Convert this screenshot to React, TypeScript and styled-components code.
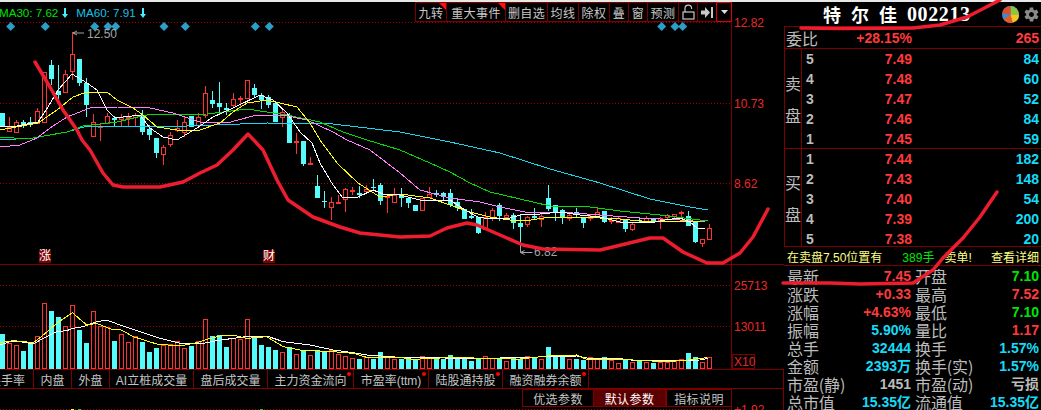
import React from "react";
import styled, { createGlobalStyle } from "styled-components";
import { IoMdSettings } from "react-icons/io";

const FONT = `"Liberation Sans", "Noto Sans CJK SC", sans-serif`;
const LINE = "#7d0000";
const RED = "#ff3232";
const CYAN = "#54fcfc";

const Global = createGlobalStyle`
  html, body { margin: 0; padding: 0; background: #000; }
  body { font-family: ${FONT}; }
`;

const Page = styled.div`
  position: relative;
  width: 1041px;
  height: 410px;
  overflow: hidden;
  background: #000;
  display: flex;
  flex-direction: column;
`;
const TopEdge = styled.div`
  height: 2px;
  flex: none;
  background: #e8e8e8;
`;
const Body = styled.div`
  flex: 1;
  display: flex;
  min-height: 0;
`;
const Main = styled.main`
  width: 784px;
  flex: none;
  display: flex;
  flex-direction: column;
`;
const PricePane = styled.section`
  position: relative;
  height: 263px;
  flex: none;
`;
const VolumePane = styled.section`
  height: 104px;
  flex: none;
`;
const Lower = styled.div`
  position: relative;
  flex: 1;
  display: flex;
  flex-direction: column;
  box-sizing: border-box;
  border-right: 1px solid ${LINE};
  overflow: hidden;
`;
const ChartSvg = styled.svg`
  display: block;
  width: 784px;
  height: 100%;
`;
const FooterSvg = styled.svg`
  display: block;
  width: 784px;
  height: 3px;
  flex: none;
`;
const AxisText = styled.text`
  font-family: ${FONT};
  font-size: 12px;
  fill: #e62a2a;
`;
const AxisTail = styled.span`
  position: absolute;
  left: 734px;
  top: 34px;
  font-size: 12px;
  line-height: 14px;
  color: #e62a2a;
`;
const PeakText = styled.text`
  font-family: ${FONT};
  font-size: 12px;
  fill: #a4a4a4;
`;
const Legend = styled.div`
  position: absolute;
  left: -1px;
  top: 4px;
  display: flex;
  gap: 8px;
  font-size: 11.6px;
  line-height: 14px;
`;
const LegendItem = styled.span<{ $color: string }>`
  color: ${(p) => p.$color};
  display: inline-flex;
  align-items: center;
  gap: 4px;
`;
const Marker = styled.span<{ $left: number }>`
  position: absolute;
  left: ${(p) => p.$left}px;
  top: 248px;
  width: 12px;
  height: 13px;
  background: #7d0000;
  color: #fff;
  font-size: 12px;
  line-height: 13px;
  text-align: center;
`;
const Toolbar = styled.div`
  position: absolute;
  left: 415px;
  top: 0;
  height: 20px;
  display: flex;
  background: #000;
`;
const ToolCell = styled.div<{ $w: number; $active?: boolean; $flag?: boolean }>`
  position: relative;
  box-sizing: border-box;
  width: ${(p) => p.$w + 1}px;
  margin-right: -1px;
  height: 20px;
  border: 1px solid ${(p) => (p.$active ? "#e00000" : LINE)};
  z-index: ${(p) => (p.$active ? 1 : 0)};
  display: flex;
  align-items: center;
  justify-content: center;
  color: #c8c8c8;
  font-size: 12px;
  letter-spacing: 0.4px;
  white-space: nowrap;
  &::after {
    content: "";
    display: ${(p) => (p.$flag ? "block" : "none")};
    position: absolute;
    top: 0;
    right: 0;
    border-top: 7px solid #ff1010;
    border-left: 7px solid transparent;
  }
`;
const TabBar = styled.nav`
  height: 20px;
  flex: none;
  box-sizing: border-box;
  display: flex;
  border-top: 1px solid ${LINE};
  border-bottom: 1px solid ${LINE};
  overflow: hidden;
`;
const Tab = styled.div<{ $w: number; $dot?: boolean; $clip?: boolean }>`
  position: relative;
  box-sizing: border-box;
  width: ${(p) => p.$w}px;
  flex: none;
  border-right: 1px solid ${LINE};
  display: flex;
  align-items: center;
  justify-content: ${(p) => (p.$clip ? "flex-end" : "center")};
  padding-right: ${(p) => (p.$clip ? 8 : 0)}px;
  color: #c4c4c4;
  font-size: 12px;
  white-space: nowrap;
  &::after {
    content: "";
    display: ${(p) => (p.$dot ? "block" : "none")};
    position: absolute;
    top: 2px;
    right: 2px;
    width: 4px;
    height: 4px;
    border-radius: 50%;
    background: #ff0000;
  }
`;
const ParamBar = styled.div`
  height: 18px;
  flex: none;
  display: flex;
  padding-left: 522px;
`;
const ParamButton = styled.div<{ $w: number; $active?: boolean }>`
  box-sizing: border-box;
  width: ${(p) => p.$w}px;
  height: 18px;
  border: 1px solid ${LINE};
  border-left-width: ${(p) => (p.$active ? 0 : 1)}px;
  background: ${(p) => (p.$active ? "#5a0000" : "transparent")};
  color: ${(p) => (p.$active ? "#fff" : "#c4c4c4")};
  font-size: 12px;
  letter-spacing: 0.4px;
  display: flex;
  align-items: center;
  justify-content: center;
`;
const Side = styled.aside`
  width: 257px;
  flex: none;
  display: flex;
  flex-direction: column;
  font-size: 14px;
`;
const SideHeader = styled.header`
  position: relative;
  height: 24px;
  flex: none;
  box-sizing: border-box;
  display: flex;
  align-items: center;
  padding-left: 39px;
`;
const StockName = styled.span`
  color: #fff;
  font-family: "Noto Sans CJK SC", sans-serif;
  font-weight: 700;
  font-size: 18px;
  letter-spacing: 10px;
  white-space: nowrap;
`;
const StockCode = styled.span`
  color: #fff;
  font-family: "Liberation Serif", serif;
  font-weight: 700;
  font-size: 20px;
  letter-spacing: 0.6px;
`;
const HeaderIcons = styled.div`
  margin-left: auto;
  display: flex;
  align-items: center;
  gap: 4px;
  padding-right: 1px;
`;
const RatioRow = styled.div`
  height: 23px;
  flex: none;
  box-sizing: border-box;
  border-top: 1px solid ${LINE};
  border-left: 1px solid ${LINE};
  border-bottom: 1px solid ${LINE};
  display: grid;
  grid-template-columns: 126px 1fr;
  padding: 0 2px 0 1px;
  align-items: center;
`;
const SplitCell = styled.div`
  display: flex;
  justify-content: space-between;
  align-items: center;
`;
const Label = styled.span`
  color: #bcbcbc;
  font-family: "Noto Sans CJK SC", sans-serif;
  font-size: 16px;
  line-height: 18px;
  white-space: nowrap;
  letter-spacing: -0.1px;
`;
const Num = styled.span<{ $color: string; $left?: boolean }>`
  color: ${(p) => p.$color};
  font-family: ${FONT};
  font-weight: 700;
  font-size: 14px;
  line-height: 18px;
  white-space: nowrap;
  text-align: ${(p) => (p.$left ? "left" : "right")};
`;
const Book = styled.section<{ $h: number }>`
  height: ${(p) => p.$h}px;
  flex: none;
  box-sizing: border-box;
  border-left: 1px solid ${LINE};
  border-bottom: 1px solid ${LINE};
  display: grid;
  grid-template-columns: 17px 1fr;
`;
const BookSide = styled.div`
  border-right: 1px solid ${LINE};
  display: flex;
  flex-direction: column;
  justify-content: center;
  gap: 14px;
  align-items: center;
  color: #bcbcbc;
  font-family: "Noto Sans CJK SC", sans-serif;
  font-size: 16px;
  line-height: 18px;
`;
const BookRows = styled.div`
  min-height: 0;
`;
const BookRow = styled.div`
  height: 20px;
  display: grid;
  grid-template-columns: 20px 86px 1fr;
  padding: 0 2px 0 4px;
  align-items: center;
`;
const Notice = styled.div`
  height: 19px;
  flex: none;
  box-sizing: border-box;
  border-bottom: 1px solid ${LINE};
  display: flex;
  align-items: center;
  padding: 0 2px 0 3px;
  font-size: 12px;
  color: #ffff80;
  white-space: nowrap;
`;
const NoticeVolume = styled.span`
  color: #00e600;
  margin-left: 20px;
`;
const NoticeTail = styled.span`
  margin-left: 10px;
`;
const NoticeLink = styled.span`
  margin-left: auto;
`;
const Stats = styled.section`
  flex: 1;
  display: grid;
  grid-template-columns: 1fr 1fr;
  grid-auto-rows: 18px;
  column-gap: 4px;
  padding: 1px 2px 0 3px;
`;
const Overlay = styled.svg`
  position: absolute;
  left: 0;
  top: 0;
  width: 1041px;
  height: 410px;
  pointer-events: none;
`;

type C = [0 | 1, number, number, number, number];
const candles: C[] = [
  [0,113,127,113,127],[1,127,131,117,131],[1,122,132,120,132],[0,122,125,120,128],[0,122,125,117,127],
  [1,111,123,108,123],[1,72,122,72,122],[0,65,79,60,85],[0,91,95,65,103],[1,74,92,70,92],
  [1,54,71,32,80],[0,59,83,59,86],[0,83,105,78,117],[1,122,136,114,136],[1,126,127,123,141],
  [1,116,123,113,123],[0,118,120,116,127],[1,117,119,114,127],[1,117,118,113,126],[1,115,117,113,127],
  [0,115,132,110,135],[0,129,135,125,140],[0,138,153,138,158],[1,147,154,145,165],[1,135,144,132,147],
  [1,128,130,120,132],[1,122,132,117,137],[0,116,127,116,127],[1,117,125,113,128],[1,93,115,86,118],
  [0,100,104,91,108],[0,103,107,82,115],[0,108,110,103,115],[1,99,105,93,108],[1,98,99,96,108],
  [1,80,98,80,98],[0,88,95,84,97],[0,95,100,93,109],[0,97,105,95,108],[0,103,122,103,122],
  [1,112,117,110,127],[0,115,143,113,143],[1,141,142,133,154],[0,141,164,141,166],[1,163,164,157,164],
  [0,186,198,175,198],[0,201,202,191,208],[1,202,207,197,220],[1,202,203,195,203],[1,189,199,188,212],
  [1,190,191,187,195],[0,193,195,186,198],[1,189,191,185,193],[0,187,188,179,190],[0,185,201,183,205],
  [1,196,197,196,213],[1,195,202,188,203],[0,195,198,188,207],[0,198,203,198,208],[0,205,211,205,211],
  [1,198,210,198,210],[1,194,197,187,197],[0,193,195,190,197],[0,193,197,192,201],[0,193,205,189,207],
  [0,202,208,198,211],[0,209,219,209,219],[0,216,218,209,219],[0,217,233,217,234],[1,217,229,212,229],
  [1,210,217,208,221],[0,205,216,203,221],[1,215,217,213,219],[0,215,223,213,229],[0,223,227,215,252],
  [1,217,224,216,227],[0,216,218,208,220],[1,216,219,214,227],[0,198,209,185,211],[0,205,212,205,221],
  [0,210,217,209,224],[1,215,218,213,221],[0,212,215,208,217],[0,218,223,218,228],[1,216,218,215,221],
  [1,212,217,208,217],[0,211,222,211,223],[1,220,221,217,224],[1,218,222,216,223],[0,220,229,220,232],
  [1,224,229,223,231],[0,220,221,218,222],[1,218,222,216,223],[0,218,221,218,222],[1,218,220,217,229],
  [1,215,217,214,219],[1,214,216,214,218],[1,212,213,211,217],[0,216,226,211,226],[0,222,242,222,243],
  [1,239,243,239,247],[1,228,239,224,239],
];
const volumeTops = [
  192,218,226,243,216,198,100,123,141,168,105,180,219,124,168,170,213,192,216,198,216,246,233,225,222,214,
  235,228,214,148,198,195,231,204,208,148,201,225,231,240,246,231,253,240,256,243,246,240,252,258,264,267,
  262,267,246,262,268,268,268,268,258,262,268,268,255,262,262,273,266,258,265,266,273,262,266,258,262,268,
  231,256,262,268,266,270,262,266,262,270,280,268,276,273,275,280,276,276,270,268,249,262,276,262,
];
const pts = (a: number[][]) => a.map(([x, y]) => `${x},${y}`).join(" ");
const white = pts([[0,127],[17,126],[38,122],[48,107],[58,90],[72,74],[87,83],[97,90],[107,110],[115,118],[140,115],[150,128],[163,137],[177,140],[197,128],[213,117],[233,108],[260,95],[273,100],[287,113],[300,132],[312,143],[320,163],[333,185],[343,198],[358,197],[373,190],[383,194],[400,195],[420,200],[450,200],[465,210],[478,217],[490,219],[510,218],[520,215],[540,214],[560,212],[580,215],[600,217],[620,222],[640,223],[655,222],[665,220],[680,218],[690,222],[697,228],[705,229]]);
const yellow = pts([[0,130],[38,123],[57,110],[73,97],[87,92],[107,92],[117,100],[133,108],[143,115],[157,127],[177,130],[200,130],[220,123],[233,112],[247,103],[267,100],[280,103],[297,107],[310,123],[320,140],[337,163],[358,183],[380,197],[400,194],[430,198],[450,205],[470,212],[490,217],[510,220],[525,221],[550,217],[580,217],[620,219],[650,222],[680,221],[700,222]]);
const magenta = pts([[0,147],[20,145],[37,138],[50,128],[67,117],[90,108],[117,107],[150,108],[173,113],[200,122],[227,123],[253,116],[283,115],[307,120],[333,132],[347,140],[370,150],[400,173],[420,190],[450,198],[480,202],[500,207],[530,213],[560,212],[600,215],[640,218],[680,220],[705,222]]);
const green = pts([[0,137],[27,139],[67,132],[83,126],[117,122],[147,115],[207,114],[247,109],[287,115],[320,122],[343,132],[367,140],[400,150],[430,163],[450,172],[470,183],[490,192],[520,199],[550,206],[590,207],[620,211],[660,215],[708,221]]);
const blue = pts([[0,140],[33,138],[67,132],[87,126],[133,126],[187,126],[267,123],[333,124],[400,132],[450,142],[500,153],[550,169],[600,183],[650,199],[690,207],[708,210]]);
const zoomPts = (a: number[][], tail: number[][]) =>
  pts([...a.map(([x, y]) => [x / 3, 270 + y / 3]), ...tail.map(([x, y]) => [400 + x / 3, 270 + y / 3])]);
const volWhite = zoomPts(
  [[0,225],[30,215],[60,215],[100,222],[130,205],[170,185],[200,182],[220,175],[250,170],[290,155],[320,150],[360,165],[420,185],[480,205],[540,220],[600,222],[650,212],[700,205],[750,198],[800,198],[850,215],[930,225],[1000,240],[1060,248],[1100,255]],
  [[0,262],[200,265],[300,264],[530,258],[560,264],[650,264],[690,270],[790,272],[900,270],[925,265]]
);
const volYellow = zoomPts(
  [[0,218],[40,212],[100,218],[130,195],[170,160],[217,128],[260,165],[290,160],[340,180],[360,178],[400,200],[470,222],[540,228],[590,218],[620,208],[660,198],[700,195],[740,205],[800,200],[850,230],[900,240],[1000,245],[1060,250],[1100,262]],
  [[0,262],[40,268],[140,263],[300,265],[350,268],[440,258],[530,255],[560,268],[700,270],[790,275],[850,272],[920,263]]
);
const diamonds = [10.7,45.3,94.7,108,115.7,164,185.3,255.3,269.3,661.7,675,682.7];
const stroke1 = "35,62 50,87 63,110 77,130 82,140 90,150 103,173 113,185 123,187 160,187 183,182 200,173 217,165 233,150 248,134 263,150 277,180 288,200 313,217 340,227 360,233 400,237 430,236 447,228 467,223 477,225 500,235 523,245 543,249 600,250 617,246 650,238 663,238 683,252 707,263 723,263 740,253 753,237 768,209";
const stroke2 = "997,192 980,217 963,238 943,258 933,270 913,283 860,284 830,283 783,283";
const stroke3 = "801,28 840,28.5 913,28 940,25 967,17 1000,0";

const cx = (k: number) => 2.5 + 7 * k;

const Candle = ({ c, k }: { c: C; k: number }) => {
  const [up, top, bot, hi, lo] = c;
  const x = cx(k);
  const col = up ? RED : CYAN;
  return (
    <g>
      <line x1={x} x2={x} y1={hi} y2={lo} stroke={col} />
      {up ? (
        <rect x={x - 2} y={top + 0.5} width={4} height={Math.max(1, bot - top)} fill="#000" stroke={col} />
      ) : (
        <rect x={x - 2.5} y={top} width={5} height={Math.max(1, bot - top)} fill={col} />
      )}
    </g>
  );
};

const toolItems = [
  { t: "九转", w: 31, flag: true }, { t: "重大事件", w: 59, flag: true }, { t: "删自选", w: 42 },
  { t: "均线", w: 31 }, { t: "除权", w: 31 }, { t: "叠", w: 19 }, { t: "窗", w: 19 }, { t: "预测", w: 31 },
];
const tabs = [
  { t: "换手率", w: 34, clip: true }, { t: "内盘", w: 38 }, { t: "外盘", w: 38 }, { t: "AI立桩成交量", w: 84 },
  { t: "盘后成交量", w: 74 }, { t: "主力资金流向", w: 86, dot: true }, { t: "市盈率(ttm)", w: 75, dot: true },
  { t: "陆股通持股", w: 74, dot: true }, { t: "融资融券余额", w: 86, dot: true },
];
const ask = [["5","7.49","84"],["4","7.48","60"],["3","7.47","52"],["2","7.46","84"],["1","7.45","59"]];
const bid = [["1","7.44","182"],["2","7.43","148"],["3","7.40","54"],["4","7.39","200"],["5","7.38","20"]];
const PRICE = "#ff3a3a";
const QTY = "#14dcf8";
const GRN = "#00e600";
const GRAY = "#bcbcbc";
const stats: [string, string, string][] = [
  ["最新","7.45",PRICE],["开盘","7.10",GRN],["涨跌","+0.33",PRICE],["最高","7.52",PRICE],
  ["涨幅","+4.63%",PRICE],["最低","7.10",GRN],["振幅","5.90%",QTY],["量比","1.17",PRICE],
  ["总手","32444",QTY],["换手","1.57%",QTY],["金额","2393万",QTY],["换手(实)","1.57%",QTY],
  ["市盈(静)","1451",GRAY],["市盈(动)","亏损",GRAY],["总市值","15.35亿",QTY],["流通值","15.35亿",QTY],
];

export default function App() {
  return (
    <Page>
      <Global />
      <TopEdge />
      <Body>
        <Main>
          <PricePane>
            <ChartSvg viewBox="0 2 784 263">
              <g stroke="#a00000" strokeDasharray="1 2" shapeRendering="crispEdges">
                <line x1="0" x2="731" y1="22.5" y2="22.5" />
                <line x1="0" x2="731" y1="103.5" y2="103.5" />
                <line x1="0" x2="731" y1="183.5" y2="183.5" />
              </g>
              <line x1="731.5" x2="731.5" y1="0" y2="265" stroke={LINE} />
              <line x1="0" x2="784" y1="264.5" y2="264.5" stroke={LINE} />
              {diamonds.map((x) => (
                <path key={x} d={`M${x} 22l4.5 4.5l-4.5 4.5l-4.5 -4.5z`} fill="#2a9fc8" />
              ))}
              <g shapeRendering="crispEdges">
                {candles.map((c, k) => <Candle key={k} c={c} k={k} />)}
              </g>
              <g fill="none" strokeWidth="1" shapeRendering="crispEdges">
                <polyline points={blue} stroke="#10d8f0" />
                <polyline points={green} stroke="#00e000" />
                <polyline points={magenta} stroke="#ff80ff" />
                <polyline points={yellow} stroke="#ffff00" />
                <polyline points={white} stroke="#ffffff" />
              </g>
              <path d="M73 33h11M73 33l4 -2M73 33l4 2" stroke="#a4a4a4" fill="none" />
              <PeakText x="87" y="38">12.50</PeakText>
              <path d="M520.5 246v6.5h12M520.5 252.5l4 -2M520.5 252.5l4 2" stroke="#a4a4a4" fill="none" />
              <PeakText x="534" y="256">6.82</PeakText>
              <AxisText x="734" y="27">12.82</AxisText>
              <AxisText x="734" y="108">10.73</AxisText>
              <AxisText x="734" y="188">8.62</AxisText>
            </ChartSvg>
            <Legend>
              <LegendItem $color="#00e000">
                MA30: 7.62
                <svg width="6" height="10" viewBox="0 0 6 10"><path d="M2 0h2v6h2l-3 4l-3 -4h2z" fill="#40f0ff" /></svg>
              </LegendItem>
              <LegendItem $color="#18c0e8">
                MA60: 7.91
                <svg width="6" height="10" viewBox="0 0 6 10"><path d="M2 0h2v6h2l-3 4l-3 -4h2z" fill="#40f0ff" /></svg>
              </LegendItem>
            </Legend>
            <Marker $left={39}>涨</Marker>
            <Marker $left={263}>财</Marker>
            <Toolbar>
              {toolItems.map((i) => (
                <ToolCell key={i.t} $w={i.w} $flag={i.flag}>{i.t}</ToolCell>
              ))}
              <ToolCell $w={19}>
                <svg width="13" height="16" viewBox="0 0 13 16" fill="none" stroke="#c8c8c8" strokeWidth="1.2">
                  <rect x="1" y="8" width="11" height="7" />
                  <path d="M3 8V4.5a3.3 3.3 0 0 1 6.6 0V5" />
                </svg>
              </ToolCell>
              <ToolCell $w={19}>
                <svg width="13" height="11" viewBox="0 0 13 11" fill="#c8c8c8">
                  <path d="M0 3.5h4V0l5 5.5l-5 5.5V7.5H0z" />
                  <rect x="10" y="0" width="2" height="11" />
                </svg>
              </ToolCell>
              <ToolCell $w={15} $active>
                <svg width="7" height="4" viewBox="0 0 7 4"><path d="M0 0h7l-3.5 4z" fill="#e0e0e0" /></svg>
              </ToolCell>
            </Toolbar>
          </PricePane>
          <VolumePane>
            <ChartSvg viewBox="0 265 784 104">
              <g stroke="#a00000" strokeDasharray="1 2" shapeRendering="crispEdges">
                <line x1="0" x2="731" y1="285.5" y2="285.5" />
                <line x1="0" x2="731" y1="326.5" y2="326.5" />
              </g>
              <line x1="731.5" x2="731.5" y1="265" y2="369" stroke={LINE} />
              <g shapeRendering="crispEdges">
                {volumeTops.map((v, k) => {
                  const top = Math.round(270 + v / 3);
                  const x = cx(k);
                  return candles[k][0] ? (
                    <rect key={k} x={x - 2} y={top + 0.5} width={4} height={368 - top} fill="none" stroke={RED} />
                  ) : (
                    <rect key={k} x={x - 2.5} y={top} width={5} height={369 - top} fill={CYAN} />
                  );
                })}
              </g>
              <g fill="none" shapeRendering="crispEdges">
                <polyline points={volWhite} stroke="#fff" />
                <polyline points={volYellow} stroke="#ffff00" />
              </g>
              <AxisText x="734" y="290">25713</AxisText>
              <AxisText x="734" y="331">13011</AxisText>
              <rect x="732.5" y="354.5" width="22" height="14" fill="#000" stroke={LINE} />
              <AxisText x="734" y="366">X10</AxisText>
            </ChartSvg>
          </VolumePane>
          <Lower>
            <TabBar>
              {tabs.map((t) => (
                <Tab key={t.t} $w={t.w} $dot={t.dot} $clip={t.clip}>{t.t}</Tab>
              ))}
            </TabBar>
            <ParamBar>
              <ParamButton $w={72}>优选参数</ParamButton>
              <ParamButton $w={72} $active>默认参数</ParamButton>
              <ParamButton $w={66}>指标说明</ParamButton>
            </ParamBar>
            <FooterSvg viewBox="0 407 784 3">
              <line x1="0" x2="731" y1="409.5" y2="409.5" stroke="#a00000" strokeDasharray="1 2" />
              <line x1="731.5" x2="731.5" y1="407" y2="410" stroke={LINE} />
              <rect x="71" y="409" width="3" height="1" fill="#ffff00" />
              <rect x="78" y="409" width="3" height="1" fill="#00e000" />
              <rect x="260" y="409" width="3" height="1" fill="#00e000" />
            </FooterSvg>
            <AxisTail>+1.92</AxisTail>
          </Lower>
        </Main>
        <Side>
          <SideHeader>
            <StockName>特尔佳</StockName>
            <StockCode>002213</StockCode>
            <HeaderIcons>
              <svg width="17" height="17" viewBox="0 0 32 32">
                <circle cx="16" cy="16" r="16" fill="#3c8ad8" />
                <path d="M16 16L16 0A16 16 0 0 1 32 16z" fill="#8cc63f" />
                <path d="M16 16L32 16A16 16 0 0 1 20 31.5z" fill="#f5c518" />
                <path d="M16 16L20 31.5A16 16 0 0 1 3 25z" fill="#e65a28" />
                <path d="M16 16L0 14A16 16 0 0 1 16 0z" fill="#d8502c" />
              </svg>
              <IoMdSettings size={17} color="#8a8a8a" />
            </HeaderIcons>
          </SideHeader>
          <RatioRow>
            <SplitCell>
              <Label>委比</Label>
              <Num $color={PRICE}>+28.15%</Num>
            </SplitCell>
            <Num $color={PRICE}>265</Num>
          </RatioRow>
          <Book $h={100}>
            <BookSide><span>卖</span><span>盘</span></BookSide>
            <BookRows>
              {ask.map(([i, p, q]) => (
                <BookRow key={i}>
                  <Num $color={GRAY} $left>{i}</Num>
                  <Num $color={PRICE}>{p}</Num>
                  <Num $color={QTY}>{q}</Num>
                </BookRow>
              ))}
            </BookRows>
          </Book>
          <Book $h={98}>
            <BookSide><span>买</span><span>盘</span></BookSide>
            <BookRows>
              {bid.map(([i, p, q]) => (
                <BookRow key={i}>
                  <Num $color={GRAY} $left>{i}</Num>
                  <Num $color={PRICE}>{p}</Num>
                  <Num $color={QTY}>{q}</Num>
                </BookRow>
              ))}
            </BookRows>
          </Book>
          <Notice>
            在卖盘7.50位置有
            <NoticeVolume>389手</NoticeVolume>
            <NoticeTail>卖单!</NoticeTail>
            <NoticeLink>查看详细</NoticeLink>
          </Notice>
          <Stats>
            {stats.map(([l, v, c]) => (
              <SplitCell key={l}>
                <Label>{l}</Label>
                <Num $color={c}>{v}</Num>
              </SplitCell>
            ))}
          </Stats>
        </Side>
      </Body>
      <Overlay viewBox="0 0 1041 410" fill="none" stroke="#ed1c2e" strokeWidth="3.5" strokeLinejoin="round" strokeLinecap="round">
        <polyline points={stroke1} />
        <polyline points={stroke2} />
        <polyline points={stroke3} />
      </Overlay>
    </Page>
  );
}
